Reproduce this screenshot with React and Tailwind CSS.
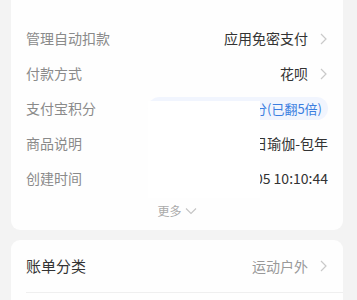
import React from "react";

const Chevron = ({ className = "" }) => (
  <svg width="7" height="12" viewBox="0 0 7 12" className={className}>
    <path d="M1 1l5 5-5 5" fill="none" stroke="#c9c9c9" strokeWidth="1.2" />
  </svg>
);

const Row = ({ label, children }) => (
  <div className="flex h-[35px] items-center justify-between">
    <span className="text-[14px] text-[#8a8a8a]">{label}</span>
    <div className="flex items-center">{children}</div>
  </div>
);

export default function App() {
  return (
    <div
      className="h-[300px] w-[357px] overflow-hidden bg-[#f3f3f3]"
      style={{ fontFamily: '"Noto Sans CJK SC", "Noto Sans", sans-serif' }}
    >
      <div className="relative -mt-[20px] ml-[11px] w-[332px] rounded-[9px] bg-[#fefefe] px-[15px] pb-[4px] pt-[41px]">
        <Row label="管理自动扣款">
          <span className="text-[14px] text-[#333]">应用免密支付</span>
          <Chevron className="ml-[12px] mr-[1px]" />
        </Row>
        <Row label="付款方式">
          <span className="text-[14px] text-[#333]">花呗</span>
          <Chevron className="ml-[12px] mr-[1px]" />
        </Row>
        <Row label="支付宝积分">
          <div className="flex h-[23px] w-[180px] items-center justify-end rounded-full bg-[#f1f5fe] pr-[6px]">
            <span className="mr-auto ml-[11px] h-[12px] w-[12px] rounded-full bg-[#f7c84a]" />
            <span className="text-[13px] text-[#3b7ee0]">获得12积分(已翻5倍)</span>
          </div>
        </Row>
        <Row label="商品说明">
          <span className="text-[14px] text-[#333]">每日瑜伽-包年</span>
        </Row>
        <Row label="创建时间">
          <span className="text-[14px] text-[#333]">2024-03-05 10:10:44</span>
        </Row>
        <div className="flex h-[30px] items-center justify-center text-[12px] text-[#aaa]">
          <span>更多</span>
          <svg width="12" height="8" viewBox="0 0 12 8" className="ml-[3px]">
            <path d="M1 1.5l5 5 5-5" fill="none" stroke="#c4c4c4" strokeWidth="1.1" />
          </svg>
        </div>
        <div className="absolute left-[137px] top-[121px] h-[97px] w-[112px] bg-white" />
      </div>
      <div className="ml-[11px] mt-[10px] w-[332px] rounded-[9px] bg-[#fefefe] pl-[15px]">
        <div className="flex h-[52px] items-center justify-between pr-[15px]">
          <span className="text-[15px] text-[#333]">账单分类</span>
          <div className="flex items-center">
            <span className="text-[14px] text-[#999]">运动户外</span>
            <Chevron className="ml-[12px] mr-[1px]" />
          </div>
        </div>
        <div className="h-px bg-[#efefef]" />
        <div className="h-[40px]" />
      </div>
    </div>
  );
}
